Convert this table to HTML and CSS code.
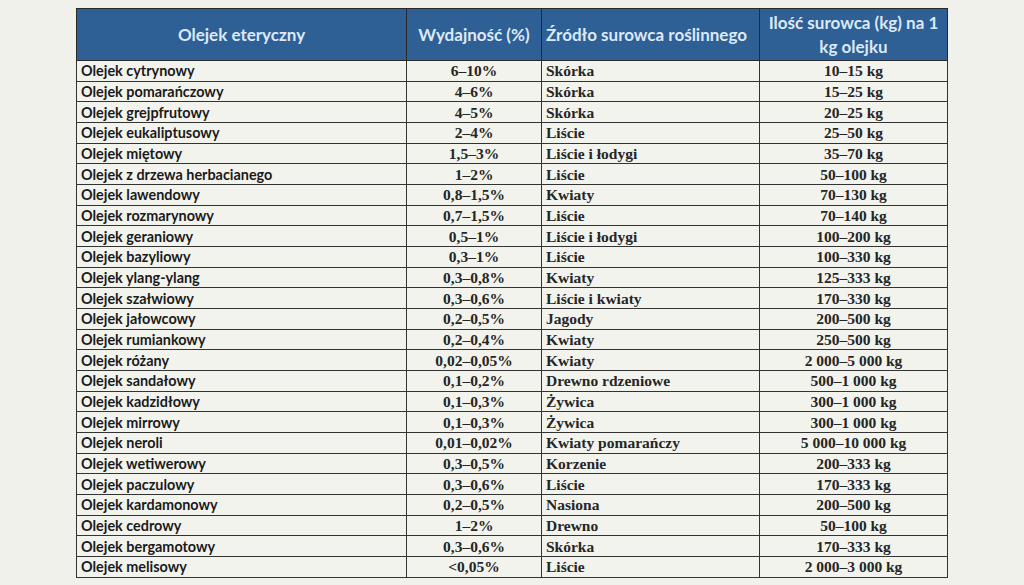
FILE: index.html
```html
<!DOCTYPE html>
<html lang="pl">
<head>
<meta charset="utf-8">
<title>Olejki eteryczne</title>
<link rel="stylesheet" href="styles.css">
</head>
<body>
<table class="oils">
  <colgroup>
    <col class="c1"><col class="c2"><col class="c3"><col class="c4">
  </colgroup>
  <thead>
    <tr>
      <th>Olejek eteryczny</th>
      <th>Wydajność (%)</th>
      <th class="left">Źródło surowca roślinnego</th>
      <th>Ilość surowca (kg) na 1 kg olejku</th>
    </tr>
  </thead>
  <tbody>
    <tr><td class="name">Olejek cytrynowy</td><td class="num">6–10%</td><td class="src">Skórka</td><td class="num">10–15 kg</td></tr>
    <tr><td class="name">Olejek pomarańczowy</td><td class="num">4–6%</td><td class="src">Skórka</td><td class="num">15–25 kg</td></tr>
    <tr><td class="name">Olejek grejpfrutowy</td><td class="num">4–5%</td><td class="src">Skórka</td><td class="num">20–25 kg</td></tr>
    <tr><td class="name">Olejek eukaliptusowy</td><td class="num">2–4%</td><td class="src">Liście</td><td class="num">25–50 kg</td></tr>
    <tr><td class="name">Olejek miętowy</td><td class="num">1,5–3%</td><td class="src">Liście i łodygi</td><td class="num">35–70 kg</td></tr>
    <tr><td class="name">Olejek z drzewa herbacianego</td><td class="num">1–2%</td><td class="src">Liście</td><td class="num">50–100 kg</td></tr>
    <tr><td class="name">Olejek lawendowy</td><td class="num">0,8–1,5%</td><td class="src">Kwiaty</td><td class="num">70–130 kg</td></tr>
    <tr><td class="name">Olejek rozmarynowy</td><td class="num">0,7–1,5%</td><td class="src">Liście</td><td class="num">70–140 kg</td></tr>
    <tr><td class="name">Olejek geraniowy</td><td class="num">0,5–1%</td><td class="src">Liście i łodygi</td><td class="num">100–200 kg</td></tr>
    <tr><td class="name">Olejek bazyliowy</td><td class="num">0,3–1%</td><td class="src">Liście</td><td class="num">100–330 kg</td></tr>
    <tr><td class="name">Olejek ylang-ylang</td><td class="num">0,3–0,8%</td><td class="src">Kwiaty</td><td class="num">125–333 kg</td></tr>
    <tr><td class="name">Olejek szałwiowy</td><td class="num">0,3–0,6%</td><td class="src">Liście i kwiaty</td><td class="num">170–330 kg</td></tr>
    <tr><td class="name">Olejek jałowcowy</td><td class="num">0,2–0,5%</td><td class="src">Jagody</td><td class="num">200–500 kg</td></tr>
    <tr><td class="name">Olejek rumiankowy</td><td class="num">0,2–0,4%</td><td class="src">Kwiaty</td><td class="num">250–500 kg</td></tr>
    <tr><td class="name">Olejek różany</td><td class="num">0,02–0,05%</td><td class="src">Kwiaty</td><td class="num">2 000–5 000 kg</td></tr>
    <tr><td class="name">Olejek sandałowy</td><td class="num">0,1–0,2%</td><td class="src">Drewno rdzeniowe</td><td class="num">500–1 000 kg</td></tr>
    <tr><td class="name">Olejek kadzidłowy</td><td class="num">0,1–0,3%</td><td class="src">Żywica</td><td class="num">300–1 000 kg</td></tr>
    <tr><td class="name">Olejek mirrowy</td><td class="num">0,1–0,3%</td><td class="src">Żywica</td><td class="num">300–1 000 kg</td></tr>
    <tr><td class="name">Olejek neroli</td><td class="num">0,01–0,02%</td><td class="src">Kwiaty pomarańczy</td><td class="num">5 000–10 000 kg</td></tr>
    <tr><td class="name">Olejek wetiwerowy</td><td class="num">0,3–0,5%</td><td class="src">Korzenie</td><td class="num">200–333 kg</td></tr>
    <tr><td class="name">Olejek paczulowy</td><td class="num">0,3–0,6%</td><td class="src">Liście</td><td class="num">170–333 kg</td></tr>
    <tr><td class="name">Olejek kardamonowy</td><td class="num">0,2–0,5%</td><td class="src">Nasiona</td><td class="num">200–500 kg</td></tr>
    <tr><td class="name">Olejek cedrowy</td><td class="num">1–2%</td><td class="src">Drewno</td><td class="num">50–100 kg</td></tr>
    <tr><td class="name">Olejek bergamotowy</td><td class="num">0,3–0,6%</td><td class="src">Skórka</td><td class="num">170–333 kg</td></tr>
    <tr><td class="name">Olejek melisowy</td><td class="num">&lt;0,05%</td><td class="src">Liście</td><td class="num">2 000–3 000 kg</td></tr>
  </tbody>
</table>
</body>
</html>
```

FILE: styles.css
```css
html, body {
  margin: 0;
  padding: 0;
  background: #f1f1eb;
}

body {
  padding-top: 8px;
}

.oils {
  margin: 0 0 0 76px;
  width: 871px;
  table-layout: fixed;
  border-collapse: collapse;
  background: #f3f3ed;
  color: #1e1e1e;
}

.c1 { width: 330px; }
.c2 { width: 135px; }
.c3 { width: 218px; }
.c4 { width: 188px; }

.oils thead tr {
  height: 52px;
}

.oils tbody tr {
  height: 20.68px;
}

.oils th {
  background: #2e5f95;
  color: #dde9f7;
  font-family: Lato, "Open Sans", sans-serif;
  font-weight: 700;
  font-size: 17px;
  line-height: 24px;
  text-align: center;
  padding: 0 8px;
  border: 1.5px solid #2a2a2a;
}

.oils th.left {
  text-align: left;
  padding-left: 4px;
  white-space: nowrap;
}

.oils td {
  padding: 0 4px;
  border: 1.5px solid #333;
  line-height: 17px;
  white-space: nowrap;
}

.oils td.name {
  font-family: Lato, "Open Sans", sans-serif;
  font-weight: 700;
  font-size: 14.4px;
  color: #1a1a1a;
}

.oils td.num,
.oils td.src {
  font-family: "Liberation Serif", "Times New Roman", serif;
  font-weight: 700;
  font-size: 15.5px;
  color: #262626;
}

.oils td.num {
  text-align: center;
}

.oils td.src {
  text-align: left;
}
```
